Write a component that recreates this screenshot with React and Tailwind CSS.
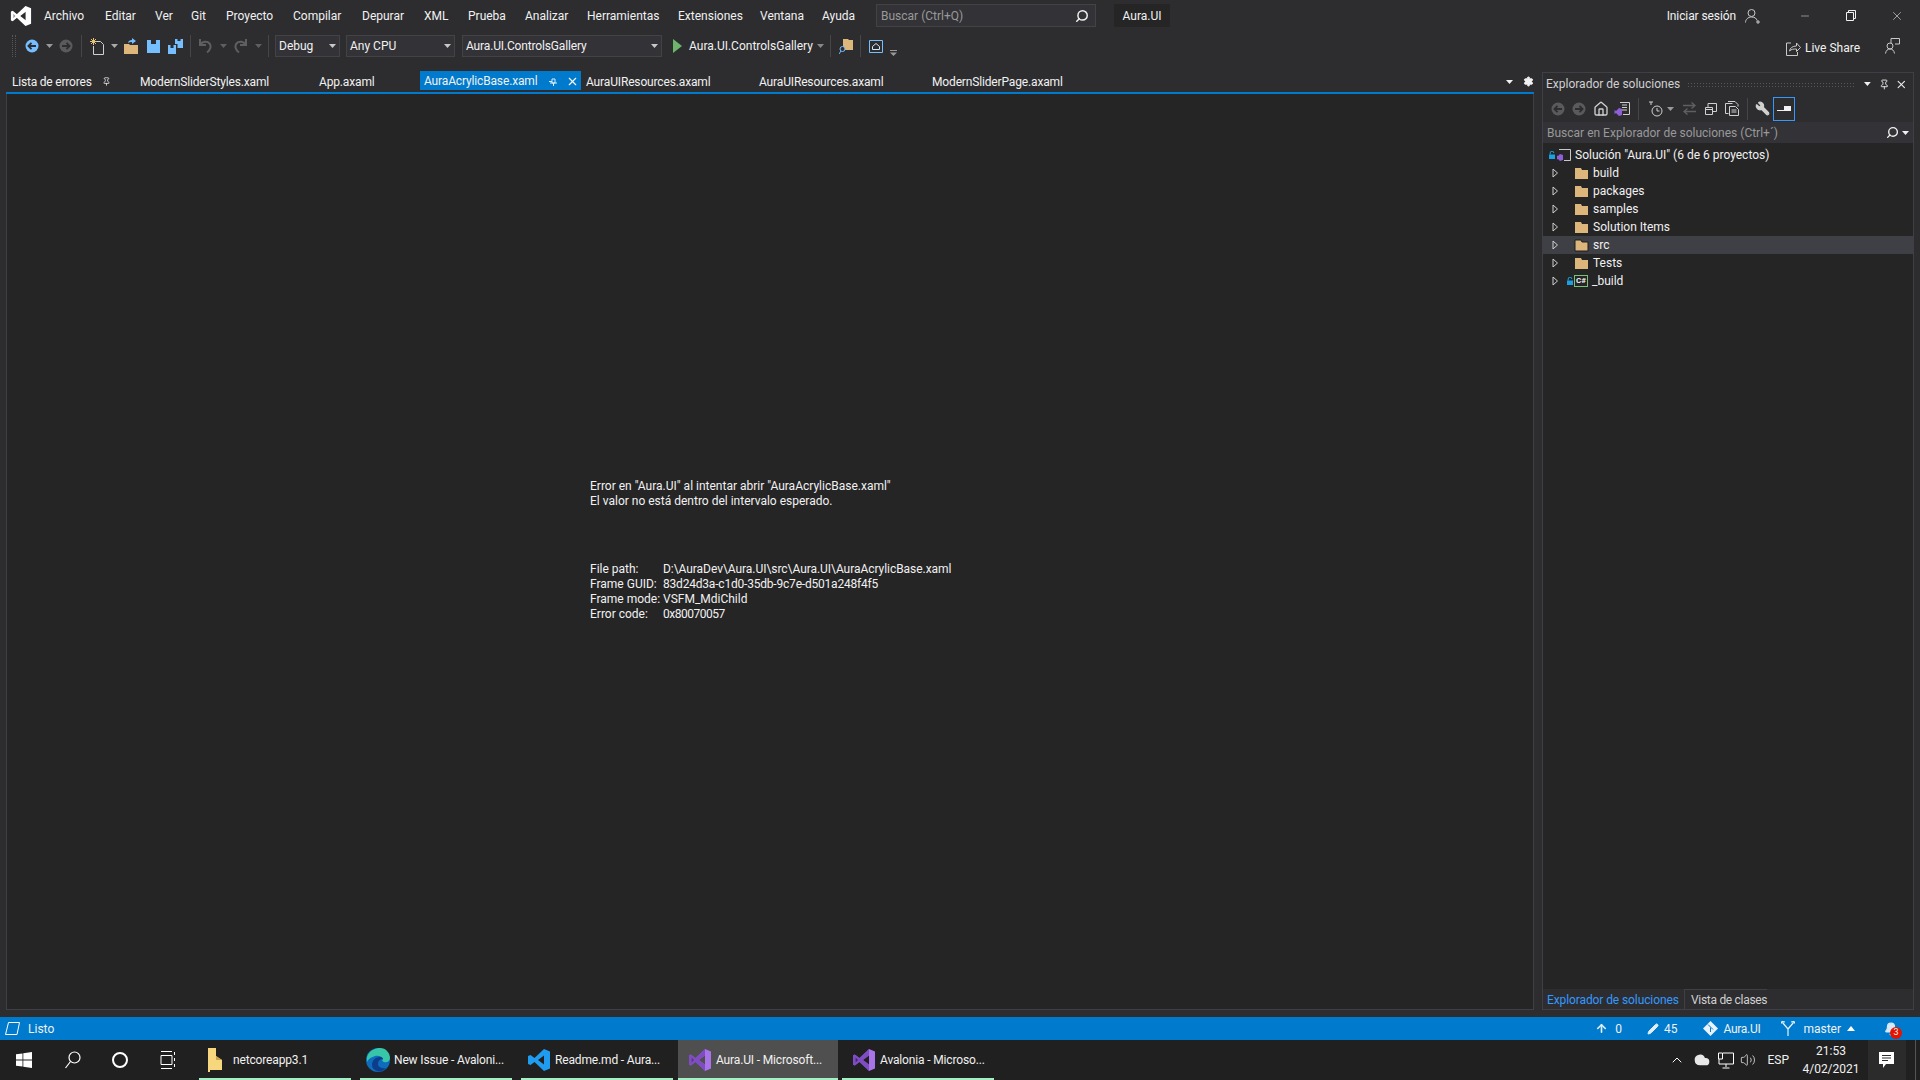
import React from 'react'
import { Search, X, Minus, Pin, Settings, Home, Wrench, Bell, ArrowUp, Pencil, ChevronUp, Cloud, Volume2 } from 'lucide-react'

const menus = [
  ['Archivo', 'w-[61px]'], ['Editar', 'w-[50px]'], ['Ver', 'w-[36px]'], ['Git', 'w-[35px]'], ['Proyecto', 'w-[67px]'],
  ['Compilar', 'w-[69px]'], ['Depurar', 'w-[62px]'], ['XML', 'w-[44px]'], ['Prueba', 'w-[57px]'], ['Analizar', 'w-[62px]'],
  ['Herramientas', 'w-[91px]'], ['Extensiones', 'w-[82px]'], ['Ventana', 'w-[62px]'], ['Ayuda', 'w-[54px]'],
]

const tabs = [
  ['ModernSliderStyles.xaml', 'w-[179px]'],
  ['App.axaml', 'w-[101px]'],
]
const tabsAfter = [
  ['AuraUIResources.axaml', 'w-[173px]'],
  ['AuraUIResources.axaml', 'w-[173px]'],
  ['ModernSliderPage.axaml', 'w-[170px]'],
]

const tree = ['build', 'packages', 'samples', 'Solution Items', 'src', 'Tests']

const Caret = ({ className = 'text-[#c8c8c8]' }) => (
  <svg width="7" height="4" viewBox="0 0 7 4" className={className}><path d="M0 0h7L3.5 4z" fill="currentColor" /></svg>
)

const VsLogo = ({ size = 24, color = '#fff', left = '#fff' }) => (
  <svg width={size} height={size} viewBox="0 0 24 24">
    <path d="M17 1l6 2.6v16.8L17 23 7.5 14 2.8 17.6 1 16.7V7.3l1.8-.9L7.5 10zM3.6 9.6v4.8L6 12zM11 12l6 4.6V7.4z" fill={color} fillRule="evenodd" />
    <path d="M2.8 6.4L1 7.3v9.4l1.8.9 4.7-3.6L17 23v-6.4L11 12l6-4.6V1L7.5 10z" fill={left} fillOpacity=".55" />
  </svg>
)

const Folder = ({ outline }) => (
  <svg width="15" height="13" viewBox="0 0 15 13">
    <path d="M1 1h6l1 2h6v9H1z" fill="#dcb67a" stroke={outline ? '#1e1e1e' : 'none'} />
  </svg>
)

const Chevron = () => (
  <svg width="7" height="10" viewBox="0 0 7 10"><path d="M1 1l4.5 4L1 9z" fill="none" stroke="#d0d0d0" /></svg>
)

const Lock = ({ className }) => (
  <svg width="6" height="8" viewBox="0 0 6 8" className={className}>
    <path d="M0 3.5h6V8H0z" fill="#1ba1e2" />
    <path d="M1.2 3.5V2a1.8 1.8 0 0 1 3.6 0" fill="none" stroke="#1ba1e2" />
  </svg>
)

const Sep = () => <div className="h-[22px] w-px bg-[#46464a]" />

const BackIcon = ({ fg = '#2d2d30', bg = '#75beff', flip }) => (
  <svg width="14" height="14" viewBox="0 0 14 14" className={flip ? '-scale-x-100' : ''}>
    <circle cx="7" cy="7" r="6.5" fill={bg} />
    <path d="M3 7h8M6.5 3.8L3.4 7l3.1 3.2" fill="none" stroke={fg} strokeWidth="1.8" />
  </svg>
)

const Save = ({ color = '#75beff' }) => (
  <svg width="13" height="13" viewBox="0 0 13 13"><path d="M0 0h13v13H0zM4 0v4h5V0z" fill={color} fillRule="evenodd" /></svg>
)

const UndoIcon = ({ className }) => (
  <svg width="13" height="16" viewBox="0 0 13 16" className={className}>
    <path d="M1 1v6h6M1.5 6.5C3 3.5 8 2.5 10.5 5.5c2 2.5 1 6.500-2.500 9" fill="none" stroke="#5f5f62" strokeWidth="2" />
  </svg>
)

const Toolbar = () => (
  <div className="flex h-[30px] items-center pl-[12px]">
    <div className="h-[22px] w-[4px] border-x border-dotted border-[#55555a]" />
    <div className="ml-[9px]"><BackIcon /></div>
    <div className="ml-[7px]"><Caret className="text-[#999]" /></div>
    <div className="ml-[6px]"><BackIcon bg="#5a5a5c" flip /></div>
    <div className="ml-[8px]"><Sep /></div>
    <svg width="14" height="17" viewBox="0 0 14 17" className="ml-[8px]">
      <path d="M5.500 3.500h5l3 3v10h-10V8" fill="none" stroke="#d0d0d0" />
      <path d="M3.500 0v7M0 3.500h7M1 1l5 5M6 1L1 6" stroke="#e8c17a" />
    </svg>
    <div className="ml-[7px]"><Caret className="text-[#aaa]" /></div>
    <svg width="15" height="16" viewBox="0 0 15 16" className="ml-[6px]">
      <path d="M0 6h5l1 1h8v9H0z" fill="#dcb67a" />
      <path d="M4 5c0-2 2-3 4-3V0l4 3-4 3V4C6.5 4 5 4 4 5z" fill="#75beff" />
    </svg>
    <div className="ml-[8px]"><Save /></div>
    <svg width="15" height="15" viewBox="0 0 15 15" className="ml-[8px]">
      <path d="M0 6h8v9H0zM2.500 6v3h3V6z" fill="#75beff" fillRule="evenodd" />
      <path d="M7 0h8v9H9.500V5H7zM9.500 0v2h3V0z" fill="#75beff" fillRule="evenodd" />
    </svg>
    <div className="ml-[7px]"><Sep /></div>
    <UndoIcon className="ml-[8px]" />
    <div className="ml-[8px]"><Caret className="text-[#5f5f62]" /></div>
    <UndoIcon className="ml-[7px] -scale-x-100" />
    <div className="ml-[8px]"><Caret className="text-[#5f5f62]" /></div>
    <div className="ml-[6px]"><Sep /></div>
    <div className="ml-[6px] flex h-[22px] w-[65px] items-center justify-between border border-[#434346] bg-[#333337] pl-[3px] pr-[3px]">
      <span>Debug</span><Caret />
    </div>
    <div className="ml-[6px] flex h-[22px] w-[109px] items-center justify-between border border-[#434346] bg-[#333337] pl-[3px] pr-[3px]">
      <span>Any CPU</span><Caret />
    </div>
    <div className="ml-[7px] flex h-[22px] w-[200px] items-center justify-between border border-[#434346] bg-[#333337] pl-[3px] pr-[3px]">
      <span className="tracking-[-0.15px]">Aura.UI.ControlsGallery</span><Caret />
    </div>
    <svg width="9" height="14" viewBox="0 0 9 14" className="ml-[11px]"><path d="M0 0l9 7-9 7z" fill="#6db46d" /></svg>
    <span className="ml-[7px] w-[125px]">Aura.UI.ControlsGallery</span>
    <div className="ml-[3px]"><Caret className="text-[#888]" /></div>
    <div className="ml-[6px]"><Sep /></div>
    <svg width="14" height="15" viewBox="0 0 14 15" className="ml-[8px]">
      <path d="M4 0h5l1 1h4v10H4z" fill="#dcb67a" />
      <circle cx="3.500" cy="10" r="2.500" fill="#2d2d30" stroke="#75beff" />
      <path d="M2 12l-2 3" stroke="#75beff" />
    </svg>
    <div className="ml-[7px]"><Sep /></div>
    <svg width="14" height="13" viewBox="0 0 14 13" className="ml-[8px]">
      <path d="M.5.5h13v12H.5z" fill="none" stroke="#75beff" />
      <path d="M3.500 6.500L7 3.500l3.500 3v3h-7z" fill="none" stroke="#d0e8ff" />
    </svg>
    <svg width="7" height="6" viewBox="0 0 7 6" className="ml-[7px] mt-[14px]"><path d="M0 0h7v1H0zM0 2.500h7L3.500 6z" fill="#999" /></svg>
    <div className="ml-auto mr-[20px] mt-[3px] flex items-center">
      <svg width="15" height="16" viewBox="0 0 15 16" className="mr-[4px]">
        <path d="M5 3H.5v12.500h11V12M3.500 11c.5-3 3-5 7-5V3l4 4.500-4 4V9c-3 0-5 0-7 2z" fill="none" stroke="#c8c8c8" />
      </svg>
      <span className="mr-[25px]">Live Share</span>
      <svg width="15" height="16" viewBox="0 0 15 16" className="-mt-[4px]">
        <circle cx="5" cy="8" r="3" fill="none" stroke="#c8c8c8" />
        <path d="M.5 15.500c.5-3 2-4.500 4.500-4.500s4 1.500 4.500 4.500M6 5V.5h8.500V6H10" fill="none" stroke="#c8c8c8" />
      </svg>
    </div>
  </div>
)

const TitleBar = () => (
  <div className="flex h-[31px] items-center">
    <div className="ml-[10px] flex w-[34px] shrink-0"><VsLogo size={22} /></div>
    {menus.map(([label, w]) => <span key={label} className={`${w} shrink-0`}>{label}</span>)}
    <div className="flex h-[23px] w-[220px] items-center justify-between border border-[#434346] bg-[#333337] pl-[4px] pr-[6px] text-[#999]">
      <span>Buscar (Ctrl+Q)</span>
      <Search size={14} strokeWidth={2.5} color="#f1f1f1" className="-scale-x-100" />
    </div>
    <div className="ml-[18px] flex h-[23px] w-[56px] items-center justify-center bg-[#252526]">Aura.UI</div>
    <span className="ml-auto tracking-[-0.1px]">Iniciar sesión</span>
    <svg width="16" height="16" viewBox="0 0 16 16" className="ml-[9px]">
      <circle cx="6.500" cy="5" r="3.500" fill="none" stroke="#c8c8c8" />
      <path d="M.5 14.500c0-3 2.500-5.500 6-5.500s5 1.500 5.500 3.500M13 12v4M11 14h4" fill="none" stroke="#c8c8c8" />
    </svg>
    <div className="ml-[21px] flex w-[46px] justify-center"><Minus size={12} strokeWidth={1} color="#f1f1f1" /></div>
    <div className="flex w-[46px] justify-center">
      <svg width="10" height="11" viewBox="0 0 10 11"><path d="M.5 2.500h7v8h-7zM2.500 2.500v-2h7v8h-2" fill="none" stroke="#f1f1f1" /></svg>
    </div>
    <div className="flex w-[46px] justify-center"><X size={14} strokeWidth={1} color="#f1f1f1" /></div>
  </div>
)

const DocTabs = () => (
  <div className="flex h-[21px] shrink-0 items-center tracking-[-0.15px]">
    <div className="flex w-[134px] items-center pl-[6px]">
      <span className="tracking-[-0.2px]">Lista de errores</span>
      <Pin size={9} className="ml-[10px]" color="#f1f1f1" />
    </div>
    {tabs.map(([label, w], i) => <div key={i} className={`${w} shrink-0`}>{label}</div>)}
    <div className="flex h-[19px] w-[161px] shrink-0 items-center self-start bg-[#007acc] pl-[4px] pt-[1px]">
      <span className="w-[125px]">AuraAcrylicBase.xaml</span>
      <svg width="9" height="9" viewBox="0 0 9 9"><path d="M3 2h3v4H3zM1 6h7M4.500 6v3M0 4.500h3" fill="none" stroke="#d8eefb" /></svg>
      <X size={13} strokeWidth={2} color="#fff" className="ml-[8px]" />
    </div>
    <div className="w-[5px]" />
    {tabsAfter.map(([label, w], i) => <div key={i} className={`${w} shrink-0`}>{label}</div>)}
    <div className="ml-auto flex items-center gap-[10px]">
      <Caret className="text-[#f1f1f1]" />
      <Settings size={11} color="#f1f1f1" fill="#f1f1f1" />
    </div>
  </div>
)

const Editor = () => (
  <div className="flex flex-1 flex-col">
    <DocTabs />
    <div className="h-[2px] shrink-0 bg-[#007acc]" />
    <div className="min-h-0 flex-1 border-x border-b border-[#3f3f46] bg-[#252526] pl-[583px] pt-[385px] leading-[15px] text-[#f1f1f1]">
      <div>Error en "Aura.UI" al intentar abrir "AuraAcrylicBase.xaml"</div>
      <div>El valor no está dentro del intervalo esperado.</div>
      <div className="mt-[53px] grid w-[400px] grid-cols-[73px_1fr]">
        <span>File path:</span><span className="tracking-[-0.05px]">D:\AuraDev\Aura.UI\src\Aura.UI\AuraAcrylicBase.xaml</span>
        <span>Frame GUID:</span><span className="tracking-[-0.2px]">83d24d3a-c1d0-35db-9c7e-d501a248f4f5</span>
        <span>Frame mode:</span><span>VSFM_MdiChild</span>
        <span>Error code:</span><span className="tracking-[-0.5px]">0x80070057</span>
      </div>
    </div>
  </div>
)

const Explorer = () => (
  <div className="ml-[8px] mt-[1px] flex w-[372px] flex-col border border-[#3f3f46] bg-[#252526]">
    <div className="flex h-[22px] shrink-0 items-center bg-[#2d2d30] pl-[3px] pr-[5px] text-[#d0d0d0]">
      <span className="shrink-0 whitespace-nowrap">Explorador de soluciones</span>
      <div className="ml-[7px] h-[5px] w-[172px] bg-[radial-gradient(#55555a_1px,transparent_1px)] bg-[length:3px_3px]" />
      <Caret className="ml-[10px] text-[#f1f1f1]" />
      <Pin size={11} color="#f1f1f1" className="ml-[8px]" />
      <X size={13} color="#f1f1f1" strokeWidth={2} className="ml-[6px]" />
    </div>
    <div className="flex h-[27px] shrink-0 items-center bg-[#2d2d30] pl-[8px]">
      <BackIcon bg="#5a5a5c" />
      <div className="ml-[7px]"><BackIcon bg="#5a5a5c" flip /></div>
      <Home size={16} color="#d0d0d0" className="ml-[7px]" />
      <svg width="16" height="14" viewBox="0 0 16 14" className="ml-[5px]">
        <path d="M6 .5h9.500v12H9M8 3h5M8 5.500h5M8 8h5" fill="none" stroke="#d0d0d0" />
        <path d="M5 6L2 9 0.500 8v4L2 11l3 3 3-1V7z" fill="#8f5fd8" />
      </svg>
      <div className="ml-[8px]"><Sep /></div>
      <svg width="16" height="16" viewBox="0 0 16 16" className="ml-[9px]">
        <circle cx="9" cy="10" r="5" fill="none" stroke="#d0d0d0" />
        <path d="M9 7v3h2.500M1 1h4M3 1v3" fill="none" stroke="#d0d0d0" />
      </svg>
      <Caret className="ml-[3px] text-[#999]" />
      <svg width="13" height="13" viewBox="0 0 13 13" className="ml-[9px]">
        <path d="M0 3.500h12M8.500 .5l3.500 3-3.500 3M13 9.500H1M4.500 6.500L1 9.500l3.500 3" fill="none" stroke="#5f5f62" strokeWidth="1.400" />
      </svg>
      <svg width="12" height="12" viewBox="0 0 12 12" className="ml-[9px]">
        <path d="M.5 4.500h7v7h-7zM3 4.500V.5h8.500v8H7.500M.5 6.500h7" fill="none" stroke="#d0d0d0" />
      </svg>
      <svg width="15" height="15" viewBox="0 0 15 15" className="ml-[8px]">
        <path d="M.5 2.500h7M.5 2.500v10h3M3 .5h7l3 3v2M4.500 5.500h6l3 3v6h-9zM6.500 9h5M6.500 11h5" fill="none" stroke="#d0d0d0" />
      </svg>
      <div className="ml-[7px]"><Sep /></div>
      <Wrench size={15} color="#d0d0d0" fill="#d0d0d0" className="ml-[7px] -scale-x-100" />
      <div className="ml-[3px] flex h-[24px] w-[22px] flex-col items-center justify-center border border-[#3399ff]">
        <svg width="14" height="5" viewBox="0 0 14 5"><path d="M0 4h14v1H0zM7 0h7v4H7z" fill="#f1f1f1" /></svg>
      </div>
    </div>
    <div className="flex h-[21px] shrink-0 items-center justify-between bg-[#333337] pl-[4px] text-[#999]">
      <span>Buscar en Explorador de soluciones (Ctrl+´)</span>
      <div className="flex items-center gap-[3px] pr-[4px]">
        <Search size={13} strokeWidth={2.5} color="#f1f1f1" className="-scale-x-100" />
        <Caret className="text-[#f1f1f1]" />
      </div>
    </div>
    <div className="min-h-0 flex-1 pt-[3px]">
      <div className="flex h-[18px] items-center pl-[6px]">
        <Lock />
        <svg width="15" height="13" viewBox="0 0 15 13" className="ml-[1px]">
          <path d="M3 .5h11.500v11H8" fill="none" stroke="#c8c8c8" />
          <path d="M4 5L2 7 1 6.500v4L2 10l2 2 3-1V6z" fill="#8f5fd8" />
        </svg>
        <span className="ml-[4px]">Solución "Aura.UI" (6 de 6 proyectos)</span>
      </div>
      {tree.map(name => (
        <div key={name} className={`flex h-[18px] items-center pl-[9px] ${name === 'src' ? 'bg-[#3f3f46]' : ''}`}>
          <Chevron />
          <div className="ml-[15px] flex"><Folder outline={name === 'src'} /></div>
          <span className="ml-[4px]">{name}</span>
        </div>
      ))}
      <div className="flex h-[18px] items-center pl-[9px]">
        <Chevron />
        <Lock className="ml-[8px]" />
        <div className="ml-[1px] flex h-[12px] w-[14px] items-center justify-center border border-[#79c07a] text-[8px] font-bold leading-none">C#</div>
        <span className="ml-[4px]">_build</span>
      </div>
    </div>
    <div className="flex h-[20px] shrink-0 items-stretch bg-[#2d2d30]">
      <div className="flex w-[141px] items-center pl-[4px] pt-[1px] tracking-[-0.1px] text-[#3399ff]">Explorador de soluciones</div>
      <div className="flex items-center border-l border-t border-[#3f3f46] pl-[6px] tracking-[-0.3px] text-[#d0d0d0]">Vista de clases</div>
    </div>
  </div>
)

const StatusBar = () => (
  <div className="flex h-[23px] shrink-0 items-center bg-[#007acc] pl-[5px]">
    <svg width="15" height="13" viewBox="0 0 15 13"><path d="M3.500.5h11l-2.500 12H.5z" fill="none" stroke="#fff" /></svg>
    <span className="ml-[8px]">Listo</span>
    <div className="ml-auto flex items-center pr-[22px]">
      <ArrowUp size={13} strokeWidth={3} color="#e0eef8" />
      <span className="ml-[7px]">0</span>
      <Pencil size={12} fill="#e0eef8" color="#e0eef8" className="ml-[25px]" />
      <span className="ml-[5px]">45</span>
      <svg width="15" height="15" viewBox="0 0 15 15" className="ml-[25px]">
        <path d="M7.500 0l7.500 7.500-7.500 7.500L0 7.500z" fill="#e8f2fa" />
        <path d="M5 3.500l3 3M7.500 6.500v4.500M8 6.500l2 2" stroke="#007acc" />
      </svg>
      <span className="ml-[6px] tracking-[-0.3px]">Aura.UI</span>
      <svg width="14" height="15" viewBox="0 0 14 15" className="ml-[21px]">
        <path d="M7 15V8L1.500 1.500M7 8l5.500-6.500M0 2.500L1 .5l3 .5M14 2.500L13 .5l-3 .5" fill="none" stroke="#e8f2fa" strokeWidth="1.200" />
      </svg>
      <span className="ml-[8px]">master</span>
      <svg width="8" height="5" viewBox="0 0 8 5" className="ml-[6px]"><path d="M0 5l4-5 4 5z" fill="#fff" /></svg>
      <div className="relative ml-[29px] flex">
        <Bell size={14} color="#d8e8f4" fill="#d8e8f4" />
        <span className="absolute left-[6px] top-[5px] flex h-[12px] w-[12px] items-center justify-center rounded-full bg-[#e51400] text-[9px] leading-none">3</span>
      </div>
    </div>
  </div>
)

const apps = [
  { id: 'files', label: 'netcoreapp3.1', box: 'ml-[7px] w-[152px]', text: 'ml-[11px]' },
  { id: 'edge', label: 'New Issue - Avaloni...', box: 'ml-[9px] w-[152px]', text: 'ml-[4px]' },
  { id: 'code', label: 'Readme.md - Aura...', box: 'ml-[9px] w-[152px]', text: 'ml-[4px]' },
  { id: 'vs', label: 'Aura.UI - Microsoft...', box: 'ml-[5px] w-[160px] bg-[#4f4f4f]', text: 'ml-[4px]' },
  { id: 'vs', label: 'Avalonia - Microso...', box: 'ml-[4px] w-[152px]', text: 'ml-[4px]' },
]

const AppIcon = ({ id }) => {
  if (id === 'files') return (
    <svg width="14" height="24" viewBox="0 0 14 24" className="ml-[9px]">
      <path d="M0 0h8v8l6 4v10H2v2H0z" fill="#f6d77e" />
      <path d="M8 0v8l6 4H8z" fill="#c9a24a" />
    </svg>
  )
  if (id === 'edge') return (
    <svg width="24" height="24" viewBox="0 0 24 24" className="ml-[6px]">
      <circle cx="12" cy="12" r="12" fill="#0f6cbd" />
      <path d="M1 9C3 2 10 0 14 0c6 0 10 5 10 10 0 3-3 5-6 4-2-.5-2-2-1-3-1-3-5-4-8-3S2 11 1 14z" fill="#38c6a8" />
      <path d="M6 17c0-4 3-8 8-8 2 0 3 1 3 2-2 0-5 1-5 5 0 3 4 5 8 4-3 3-6 4-9 3-3-1-5-3-5-6z" fill="#0c3d8a" />
    </svg>
  )
  if (id === 'code') return (
    <svg width="24" height="24" viewBox="0 0 24 24" className="ml-[6px]">
      <path d="M17 1l6 2.600v16.800L17 23 7.500 14l-4 3.100L1 16V8l2.500-1.100 4 3.100zM17 7.400L11 12l6 4.600z" fill="#1f9cf0" fillRule="evenodd" />
    </svg>
  )
  return <div className="ml-[10px] flex"><VsLogo size={24} color="#a974e8" left="#5e2ca5" /></div>
}

const Taskbar = () => (
  <div className="flex h-[40px] shrink-0 items-center bg-[#202020]">
    <div className="ml-[16px] flex w-[49px]">
      <svg width="16" height="16" viewBox="0 0 16 16"><path d="M0 2.300l6.500-.9v6.200H0zM7.300 1.300L16 0v7.600H7.300zM0 8.400h6.500v6.200L0 13.700zM7.300 8.400H16V16l-8.700-1.300z" fill="#fff" /></svg>
    </div>
    <div className="flex w-[47px]">
      <svg width="16" height="18" viewBox="0 0 16 18"><circle cx="9.500" cy="6.500" r="5.500" fill="none" stroke="#fff" strokeWidth="1.200" /><path d="M5.500 10.500L.5 17" stroke="#fff" strokeWidth="1.200" /></svg>
    </div>
    <div className="flex w-[48px]">
      <div className="size-[16px] rounded-full border-2 border-white" />
    </div>
    <div className="flex w-[32px]">
      <svg width="16" height="18" viewBox="0 0 16 18"><path d="M1 .5h11M1 17.500h11M1 4.500h11v9H1zM14.500 1v3M14.500 7v3M14.500 13v3" fill="none" stroke="#fff" /></svg>
    </div>
    {apps.map((a, i) => (
      <div key={i} className={`${a.box} flex h-full shrink-0 items-center border-b-2 border-[#a5efc4] pt-[2px]`}>
        <AppIcon id={a.id} />
        <span className={`${a.text} tracking-[-0.15px]`}>{a.label}</span>
      </div>
    ))}
    <div className="ml-auto flex h-full items-center">
      <ChevronUp size={16} strokeWidth={1.5} color="#fff" />
      <Cloud size={16} color="#e8e8e8" fill="#e8e8e8" className="ml-[9px]" />
      <svg width="16" height="17" viewBox="0 0 16 17" className="ml-[8px]">
        <path d="M5 1h10.500v11H1V7M8 12v3M4.500 16h7M.5 1h4v6h-4z" fill="none" stroke="#fff" />
      </svg>
      <Volume2 size={16} color="#e8e8e8" strokeWidth={1.2} className="ml-[6px]" />
      <span className="ml-[11px]">ESP</span>
      <div className="ml-[12px] flex w-[60px] flex-col items-center leading-[18px]">
        <span>21:53</span>
        <span>4/02/2021</span>
      </div>
      <div className="ml-[7px] flex h-full w-[38px] items-center justify-center bg-[#2b2b2b]">
        <svg width="16" height="17" viewBox="0 0 16 17"><path d="M0 0h15v12H7l-3 4v-4H0z" fill="#fff" /><path d="M3 3.500h9M3 6h9M3 8.500h6" stroke="#2b2b2b" /></svg>
      </div>
      <div className="ml-[9px] h-full w-[5px] border-l border-[#555]" />
    </div>
  </div>
)

const App = () => (
  <div className="flex h-screen w-screen flex-col overflow-hidden bg-[#2d2d30] font-['Roboto',sans-serif] text-[12px] leading-none text-[#f1f1f1]">
    <TitleBar />
    <Toolbar />
    <div className="flex min-h-0 flex-1 pb-[7px] pl-[6px] pr-[6px] pt-[10px]">
      <Editor />
      <Explorer />
    </div>
    <StatusBar />
    <Taskbar />
  </div>
)

export default App
